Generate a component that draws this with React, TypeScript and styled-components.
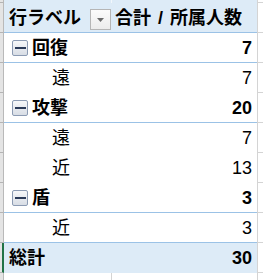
import React from "react";
import styled, { createGlobalStyle } from "styled-components";

const GlobalStyle = createGlobalStyle`
  html, body {
    margin: 0;
    padding: 0;
    background: #ffffff;
  }
  body {
    font-family: "Liberation Sans", "Noto Sans CJK JP", sans-serif;
    color: #000000;
  }
`;

const BLUE_FILL = "#ddebf7";
const BLUE_LINE = "#9bc2e6";
const GRID = "#d4d4d4";

const Sheet = styled.div`
  width: 263px;
  height: 280px;
  overflow: hidden;
  display: flex;
  flex-direction: column;
`;

const Row = styled.div<{ $h: number }>`
  display: flex;
  height: ${(p) => p.$h}px;
  flex: none;
`;

const RowHead = styled.div<{ $active?: boolean; $noBottom?: boolean }>`
  width: 4px;
  flex: none;
  box-sizing: border-box;
  background: #e4e4e4;
  border-right: ${(p) => (p.$active ? "2px solid #217346" : "1px solid #b9b9b9")};
  border-bottom: ${(p) => (p.$noBottom ? "none" : "1px solid #b4b4b4")};
`;

type Tone = "header" | "total" | "plain";

const Band = styled.div<{ $tone: Tone; $line: "blue" | "none" }>`
  width: 253px;
  flex: none;
  display: flex;
  box-sizing: border-box;
  background: ${(p) => (p.$tone === "plain" ? "#ffffff" : BLUE_FILL)};
  border-bottom: 1px solid ${(p) => (p.$line === "blue" ? BLUE_LINE : "transparent")};
  font-size: 18px;
  line-height: 1;
`;

const LabelCell = styled.div<{ $indent: number; $bold?: boolean }>`
  width: 107px;
  flex: none;
  display: flex;
  align-items: center;
  box-sizing: border-box;
  padding-left: ${(p) => p.$indent}px;
  font-weight: ${(p) => (p.$bold ? 700 : 400)};
  white-space: nowrap;
  position: relative;
`;

const ValueCell = styled.div<{ $bold?: boolean; $align?: "left" | "right" }>`
  width: 146px;
  flex: none;
  display: flex;
  align-items: center;
  justify-content: ${(p) => (p.$align === "left" ? "flex-start" : "flex-end")};
  box-sizing: border-box;
  padding-left: 4px;
  padding-right: 5px;
  font-weight: ${(p) => (p.$bold ? 700 : 400)};
  white-space: pre;
  word-spacing: 2px;
`;

const EdgeCell = styled.div<{ $noBottom?: boolean }>`
  flex: 1;
  box-sizing: border-box;
  border-left: 1px solid ${GRID};
  border-bottom: ${(p) => (p.$noBottom ? "none" : `1px solid ${GRID}`)};
  background: #ffffff;
`;

const TopStrip = styled.div`
  width: 253px;
  flex: none;
  display: flex;
  background: ${BLUE_FILL};
`;

const TopLeft = styled.div`
  width: 107px;
  flex: none;
`;

const TopRight = styled.div`
  flex: 1;
  border-left: 1px solid #f2f7fc;
`;

const BlankLeft = styled.div`
  width: 107px;
  flex: none;
  background: #ffffff;
`;

const BlankRight = styled.div`
  width: 146px;
  flex: none;
  box-sizing: border-box;
  border-left: 1px solid ${GRID};
  background: #ffffff;
`;

const FilterButton = styled.div`
  position: absolute;
  left: 86px;
  top: 6px;
  width: 21px;
  height: 21px;
  box-sizing: border-box;
  border: 1px solid #b5b5b5;
  background: linear-gradient(#fbfbfb, #ececec);
  display: flex;
  align-items: center;
  justify-content: center;
`;

const Toggle = styled.div`
  width: 16px;
  height: 16px;
  flex: none;
  box-sizing: border-box;
  border: 1px solid #8c9bb3;
  border-radius: 2px;
  background: linear-gradient(#f6f7f9, #d8dde5);
  display: flex;
  align-items: center;
  justify-content: center;
  margin-right: 4px;
`;

const ToggleBar = styled.div`
  width: 11px;
  height: 2px;
  background: #2a3a58;
`;

const Label = styled.span`
  display: block;
`;

type Group = { name: string; total: number; children: [string, number][] };

const groups: Group[] = [
  { name: "回復", total: 7, children: [["遠", 7]] },
  { name: "攻撃", total: 20, children: [["遠", 7], ["近", 13]] },
  { name: "盾", total: 3, children: [["近", 3]] },
];

export default function App() {
  const rows: React.ReactNode[] = [];
  groups.forEach((g, gi) => {
    rows.push(
      <Row $h={30} key={`g${gi}`}>
        <RowHead />
        <Band $tone="plain" $line="blue">
          <LabelCell $indent={8} $bold>
            <Toggle>
              <ToggleBar />
            </Toggle>
            <Label>{g.name}</Label>
          </LabelCell>
          <ValueCell $bold>{g.total}</ValueCell>
        </Band>
        <EdgeCell />
      </Row>
    );
    g.children.forEach(([name, v], ci) => {
      const lastBeforeTotal = gi === groups.length - 1 && ci === g.children.length - 1;
      rows.push(
        <Row $h={30} key={`g${gi}c${ci}`}>
          <RowHead />
          <Band $tone="plain" $line={lastBeforeTotal ? "blue" : "none"}>
            <LabelCell $indent={48}>
              <Label>{name}</Label>
            </LabelCell>
            <ValueCell>{v}</ValueCell>
          </Band>
          <EdgeCell />
        </Row>
      );
    });
  });

  return (
    <>
      <GlobalStyle />
      <Sheet>
        <Row $h={3}>
          <RowHead />
          <TopStrip>
            <TopLeft />
            <TopRight />
          </TopStrip>
          <EdgeCell />
        </Row>
        <Row $h={30}>
          <RowHead />
          <Band $tone="header" $line="blue">
            <LabelCell $indent={5} $bold>
              <Label>行ラベル</Label>
              <FilterButton>
                <svg width="7" height="4" viewBox="0 0 7 4">
                  <polygon points="0,0 7,0 3.5,4" fill="#6b6b6b" />
                </svg>
              </FilterButton>
            </LabelCell>
            <ValueCell $bold $align="left">
              {"合計 / 所属人数"}
            </ValueCell>
          </Band>
          <EdgeCell />
        </Row>
        {rows}
        <Row $h={30}>
          <RowHead $active />
          <Band $tone="total" $line="none">
            <LabelCell $indent={5} $bold>
              <Label>総計</Label>
            </LabelCell>
            <ValueCell $bold>30</ValueCell>
          </Band>
          <EdgeCell />
        </Row>
        <Row $h={7}>
          <RowHead $noBottom />
          <BlankLeft />
          <BlankRight />
          <EdgeCell $noBottom />
        </Row>
      </Sheet>
    </>
  );
}
